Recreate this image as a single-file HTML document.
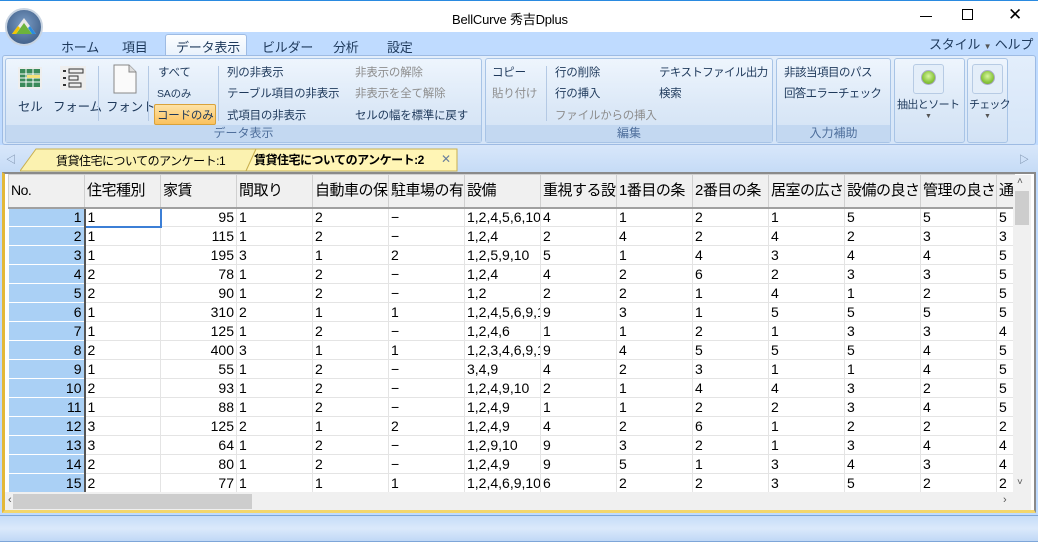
<!DOCTYPE html>
<html><head><meta charset="utf-8">
<style>
*{box-sizing:border-box;margin:0;padding:0}
body{width:1038px;height:542px;overflow:hidden;background:#fff;font-family:"Liberation Sans","Noto Sans CJK JP",sans-serif;position:relative;color:#15428b}
.abs{position:absolute}
.t{position:absolute;font-size:11.5px;white-space:nowrap;letter-spacing:-0.2px}
.dk{color:#1e395b}
.gr{color:#8d8d8d}
.grp{position:absolute;border:1px solid #a8c4e6;border-radius:3px;background:linear-gradient(#eef5fd,#dbe8f7 60%,#d2e2f5)}
.glabel{position:absolute;left:0;right:0;bottom:0;height:17px;background:#c3d8f1;text-align:center;font-size:12px;color:#4f6f9c;line-height:17px}
.sep{position:absolute;width:1px;background:#b4c9e4}
table{position:absolute;left:8px;top:174px;width:1006px;border-collapse:collapse;table-layout:fixed;font-family:"Liberation Sans","Noto Sans CJK JP",sans-serif;font-size:14px;color:#000}
td,th{overflow:hidden;white-space:nowrap;height:19px;border:1px solid #e4e4e4;padding:0 2px;font-weight:normal;text-align:left;line-height:17px;text-overflow:clip}
th{height:33px;background:#f0f0f0;border:1px solid #d0d0d0;border-bottom:2px solid #a0a0a0;font-size:15px;padding:0 2px;letter-spacing:-0.5px}
td.r{text-align:right}
td.h{background:#aad0f5;text-align:right;border:1px solid #fff;border-right:2px solid #555}
</style></head><body>
<!-- title bar -->
<div class="abs" style="left:0;top:0;width:1038px;height:32px;background:#fff;border-top:1px solid #2a8ae0"></div>
<div class="t" style="left:452px;top:9px;color:#000;font-size:13px">BellCurve 秀吉Dplus</div>
<div class="abs" style="left:920px;top:16px;width:12px;height:1px;background:#000"></div>
<div class="abs" style="left:962px;top:9px;width:11px;height:11px;border:1px solid #000"></div>
<div class="t" style="left:1008px;top:5px;color:#000;font-size:17px">✕</div>
<!-- tab row -->
<div class="abs" style="left:0;top:32px;width:1038px;height:113px;background:#bfdbff"></div>
<div class="abs" style="left:165px;top:34px;width:82px;height:22px;background:linear-gradient(#fdfeff,#e8f1fc);border:1px solid #9ebbe3;border-bottom:none;border-radius:3px 3px 0 0"></div>
<div class="t dk" style="left:61px;top:37px;font-size:13px">ホーム</div>
<div class="t dk" style="left:122px;top:37px;font-size:13px">項目</div>
<div class="t dk" style="left:176px;top:37px;font-size:13px">データ表示</div>
<div class="t dk" style="left:262px;top:37px;font-size:13px">ビルダー</div>
<div class="t dk" style="left:333px;top:37px;font-size:13px">分析</div>
<div class="t dk" style="left:387px;top:37px;font-size:13px">設定</div>
<div class="t dk" style="left:929px;top:34px;font-size:13px">スタイル <span style="font-size:8px;color:#555">▼</span> ヘルプ <span style="font-size:8px;color:#555">▼</span></div>
<!-- logo -->
<div class="abs" style="left:5px;top:8px;width:38px;height:38px;border-radius:50%;background:radial-gradient(circle at 50% 40%,#7a9cc5,#33517a);border:2px solid #c8d4e2"></div>
<svg class="abs" style="left:11px;top:17px" width="26" height="18"><polygon points="1,17 13,1 25,17" fill="#e8e8e8"/><polygon points="5,17 13,6 21,17" fill="#6cb33b"/><polygon points="1,17 5,17 9,11 7,9" fill="#f2c500"/><polygon points="25,17 21,17 17,11 19,9" fill="#2a8ce0"/></svg>
<!-- ribbon body -->
<div class="abs" style="left:2px;top:55px;width:1034px;height:90px;background:linear-gradient(#e3eefb,#d5e5f8);border:1px solid #9ebbe3;border-radius:3px"></div>
<div class="grp" style="left:5px;top:58px;width:477px;height:85px"><div class="glabel">データ表示</div></div>
<div class="grp" style="left:485px;top:58px;width:288px;height:85px"><div class="glabel">編集</div></div>
<div class="grp" style="left:776px;top:58px;width:115px;height:85px"><div class="glabel">入力補助</div></div>
<div class="grp" style="left:894px;top:58px;width:71px;height:85px"></div>
<div class="grp" style="left:967px;top:58px;width:41px;height:85px"></div>
<!-- group1 icons -->
<svg class="abs" style="left:18px;top:67px" width="24" height="22"><rect x="0" y="0" width="24" height="22" fill="#eee"/><rect x="2" y="2" width="20" height="18" fill="#3b8a5a"/><g stroke="#fff" stroke-width="1"><line x1="2" y1="7" x2="22" y2="7"/><line x1="2" y1="11" x2="22" y2="11"/><line x1="2" y1="15" x2="22" y2="15"/><line x1="8" y1="2" x2="8" y2="20"/><line x1="15" y1="2" x2="15" y2="20"/></g><rect x="9" y="8" width="13" height="3" fill="#f5e27a"/></svg>
<svg class="abs" style="left:60px;top:66px" width="26" height="24"><rect width="26" height="24" fill="#eee"/><g fill="none" stroke="#333"><rect x="9" y="3" width="14" height="4"/><rect x="9" y="10" width="9" height="4"/><rect x="9" y="17" width="12" height="4"/></g><g fill="#333"><rect x="3" y="4" width="3" height="2"/><rect x="3" y="11" width="3" height="2"/><rect x="3" y="18" width="3" height="2"/></g></svg>
<svg class="abs" style="left:113px;top:64px" width="24" height="30"><path d="M1 1 H16 L23 8 V29 H1 Z" fill="#fafafa" stroke="#888"/><path d="M16 1 V8 H23" fill="#ddd" stroke="#888"/></svg>
<div class="t dk" style="left:18px;top:96px;font-size:12.5px">セル</div>
<div class="t dk" style="left:53px;top:96px;font-size:12.5px">フォーム</div>
<div class="t dk" style="left:106px;top:96px;font-size:12.5px">フォント</div>
<div class="sep" style="left:98px;top:66px;height:55px"></div>
<div class="sep" style="left:148px;top:66px;height:55px"></div>
<div class="sep" style="left:218px;top:66px;height:55px"></div>
<div class="t dk" style="left:158px;top:64px">すべて</div>
<div class="t dk" style="left:157px;top:86px;font-size:10.5px">SAのみ</div>
<div class="abs" style="left:154px;top:104px;width:62px;height:21px;background:linear-gradient(#fde3a7,#fbc15d);border:1px solid #d9a23b;border-radius:2px"></div>
<div class="t dk" style="left:157px;top:107px">コードのみ</div>
<div class="t dk" style="left:227px;top:64px">列の非表示</div>
<div class="t dk" style="left:227px;top:85px">テーブル項目の非表示</div>
<div class="t dk" style="left:227px;top:107px">式項目の非表示</div>
<div class="t gr" style="left:355px;top:64px">非表示の解除</div>
<div class="t gr" style="left:355px;top:85px">非表示を全て解除</div>
<div class="t dk" style="left:355px;top:107px">セルの幅を標準に戻す</div>
<!-- group2 -->
<div class="t dk" style="left:492px;top:64px">コピー</div>
<div class="t gr" style="left:492px;top:85px">貼り付け</div>
<div class="sep" style="left:546px;top:66px;height:55px"></div>
<div class="t dk" style="left:555px;top:64px">行の削除</div>
<div class="t dk" style="left:555px;top:85px">行の挿入</div>
<div class="t gr" style="left:555px;top:107px">ファイルからの挿入</div>
<div class="t dk" style="left:659px;top:64px;letter-spacing:-0.6px">テキストファイル出力</div>
<div class="t dk" style="left:659px;top:85px">検索</div>
<div class="t dk" style="left:784px;top:64px;letter-spacing:-0.5px">非該当項目のパス</div>
<div class="t dk" style="left:784px;top:85px;letter-spacing:-0.7px">回答エラーチェック</div>
<!-- big buttons -->
<div class="abs" style="left:913px;top:64px;width:31px;height:30px;border:1px solid #b7cbe4;border-radius:3px;background:#e4eef9"></div>
<div class="abs" style="left:921px;top:70px;width:15px;height:15px;border-radius:50%;background:radial-gradient(circle at 50% 40%,#d8f5a0,#88c53a 60%,#6a9c30);border:1px solid #aac"></div>
<div class="t dk" style="left:897px;top:96px;font-size:11px;letter-spacing:-0.6px">抽出とソート</div>
<div class="t" style="left:925px;top:113px;font-size:7px;color:#555">▼</div>
<div class="abs" style="left:972px;top:64px;width:31px;height:30px;border:1px solid #b7cbe4;border-radius:3px;background:#e4eef9"></div>
<div class="abs" style="left:980px;top:70px;width:15px;height:15px;border-radius:50%;background:radial-gradient(circle at 50% 40%,#d8f5a0,#88c53a 60%,#6a9c30);border:1px solid #aac"></div>
<div class="t dk" style="left:969px;top:96px;font-size:11px;letter-spacing:-0.8px">チェック</div>
<div class="t" style="left:984px;top:113px;font-size:7px;color:#555">▼</div>
<!-- sheet tab strip -->
<div class="abs" style="left:0;top:145px;width:1038px;height:28px;background:linear-gradient(#d8e7fa,#c5dbf6)"></div>
<div class="t" style="left:6px;top:151px;font-size:10px;color:#6a7f9c">◁</div>
<div class="t" style="left:1019px;top:151px;font-size:10px;color:#6a7f9c">▷</div>
<svg class="abs" style="left:20px;top:148px" width="440" height="24"><polygon points="0,23 16,1 236,1 226,23" fill="#fbf2b0" stroke="#c9b050"/><polygon points="226,23 236,1 437,1 437,23" fill="#fff5b5" stroke="#c9b050"/></svg>
<div class="t" style="left:56px;top:152px;color:#000;font-size:12px;letter-spacing:-0.5px">賃貸住宅についてのアンケート:1</div>
<div class="t" style="left:254px;top:151px;color:#000;font-size:12px;font-weight:bold;letter-spacing:-0.5px">賃貸住宅についてのアンケート:2</div>
<div class="t" style="left:441px;top:152px;color:#6a7f9c;font-size:12px">✕</div>
<!-- grid area -->
<div class="abs" style="left:0;top:172px;width:1038px;height:343px;background:#bfdbff"></div>
<div class="abs" style="left:2px;top:172px;width:1034px;height:341px;background:#fff;border:2px solid #8a8a8a;border-left:3px solid #e3b83a;border-bottom:3px solid #f3d66c"></div>
<table>
<colgroup><col style="width:76px"><col style="width:76px"><col style="width:76px"><col style="width:76px"><col style="width:76px"><col style="width:76px"><col style="width:76px"><col style="width:76px"><col style="width:76px"><col style="width:76px"><col style="width:76px"><col style="width:76px"><col style="width:76px"><col style="width:18px"></colgroup>
<tr><th style="font-size:14px">No.</th><th>住宅種別</th><th>家賃</th><th>間取り</th><th>自動車の保</th><th>駐車場の有</th><th>設備</th><th>重視する設</th><th>1番目の条</th><th>2番目の条</th><th>居室の広さ</th><th>設備の良さ</th><th>管理の良さ</th><th>通</th></tr>
<tr><td class="h">1</td><td style="border:2px solid #3c7fd6">1</td><td class="r">95</td><td>1</td><td>2</td><td>−</td><td>1,2,4,5,6,10</td><td>4</td><td>1</td><td>2</td><td>1</td><td>5</td><td>5</td><td>5</td></tr>
<tr><td class="h">2</td><td>1</td><td class="r">115</td><td>1</td><td>2</td><td>−</td><td>1,2,4</td><td>2</td><td>4</td><td>2</td><td>4</td><td>2</td><td>3</td><td>3</td></tr>
<tr><td class="h">3</td><td>1</td><td class="r">195</td><td>3</td><td>1</td><td>2</td><td>1,2,5,9,10</td><td>5</td><td>1</td><td>4</td><td>3</td><td>4</td><td>4</td><td>5</td></tr>
<tr><td class="h">4</td><td>2</td><td class="r">78</td><td>1</td><td>2</td><td>−</td><td>1,2,4</td><td>4</td><td>2</td><td>6</td><td>2</td><td>3</td><td>3</td><td>5</td></tr>
<tr><td class="h">5</td><td>2</td><td class="r">90</td><td>1</td><td>2</td><td>−</td><td>1,2</td><td>2</td><td>2</td><td>1</td><td>4</td><td>1</td><td>2</td><td>5</td></tr>
<tr><td class="h">6</td><td>1</td><td class="r">310</td><td>2</td><td>1</td><td>1</td><td>1,2,4,5,6,9,1</td><td>9</td><td>3</td><td>1</td><td>5</td><td>5</td><td>5</td><td>5</td></tr>
<tr><td class="h">7</td><td>1</td><td class="r">125</td><td>1</td><td>2</td><td>−</td><td>1,2,4,6</td><td>1</td><td>1</td><td>2</td><td>1</td><td>3</td><td>3</td><td>4</td></tr>
<tr><td class="h">8</td><td>2</td><td class="r">400</td><td>3</td><td>1</td><td>1</td><td>1,2,3,4,6,9,1</td><td>9</td><td>4</td><td>5</td><td>5</td><td>5</td><td>4</td><td>5</td></tr>
<tr><td class="h">9</td><td>1</td><td class="r">55</td><td>1</td><td>2</td><td>−</td><td>3,4,9</td><td>4</td><td>2</td><td>3</td><td>1</td><td>1</td><td>4</td><td>5</td></tr>
<tr><td class="h">10</td><td>2</td><td class="r">93</td><td>1</td><td>2</td><td>−</td><td>1,2,4,9,10</td><td>2</td><td>1</td><td>4</td><td>4</td><td>3</td><td>2</td><td>5</td></tr>
<tr><td class="h">11</td><td>1</td><td class="r">88</td><td>1</td><td>2</td><td>−</td><td>1,2,4,9</td><td>1</td><td>1</td><td>2</td><td>2</td><td>3</td><td>4</td><td>5</td></tr>
<tr><td class="h">12</td><td>3</td><td class="r">125</td><td>2</td><td>1</td><td>2</td><td>1,2,4,9</td><td>4</td><td>2</td><td>6</td><td>1</td><td>2</td><td>2</td><td>2</td></tr>
<tr><td class="h">13</td><td>3</td><td class="r">64</td><td>1</td><td>2</td><td>−</td><td>1,2,9,10</td><td>9</td><td>3</td><td>2</td><td>1</td><td>3</td><td>4</td><td>4</td></tr>
<tr><td class="h">14</td><td>2</td><td class="r">80</td><td>1</td><td>2</td><td>−</td><td>1,2,4,9</td><td>9</td><td>5</td><td>1</td><td>3</td><td>4</td><td>3</td><td>4</td></tr>
<tr><td class="h">15</td><td>2</td><td class="r">77</td><td>1</td><td>1</td><td>1</td><td>1,2,4,6,9,10</td><td>6</td><td>2</td><td>2</td><td>3</td><td>5</td><td>2</td><td>2</td></tr>
</table>
<!-- vertical scrollbar -->
<div class="abs" style="left:1013px;top:175px;width:18px;height:317px;background:#f0f0f0"></div>
<div class="t" style="left:1017px;top:176px;font-size:10px;color:#555">˄</div>
<div class="abs" style="left:1015px;top:191px;width:14px;height:34px;background:#cdcdcd"></div>
<div class="t" style="left:1017px;top:477px;font-size:10px;color:#555">˅</div>
<!-- horizontal scrollbar -->
<div class="abs" style="left:5px;top:492px;width:1026px;height:18px;background:#f0f0f0"></div>
<div class="t" style="left:8px;top:494px;font-size:11px;color:#555">‹</div>
<div class="abs" style="left:13px;top:494px;width:239px;height:15px;background:#cdcdcd"></div>
<div class="t" style="left:1003px;top:494px;font-size:11px;color:#555">›</div>
<!-- status bar -->
<div class="abs" style="left:0;top:515px;width:1038px;height:27px;background:linear-gradient(#c5dcf8,#dbe9fb 50%,#c0d8f6);border-top:1px solid #7ea6d8;border-bottom:1px solid #7ea6d8"></div>
</body></html>
